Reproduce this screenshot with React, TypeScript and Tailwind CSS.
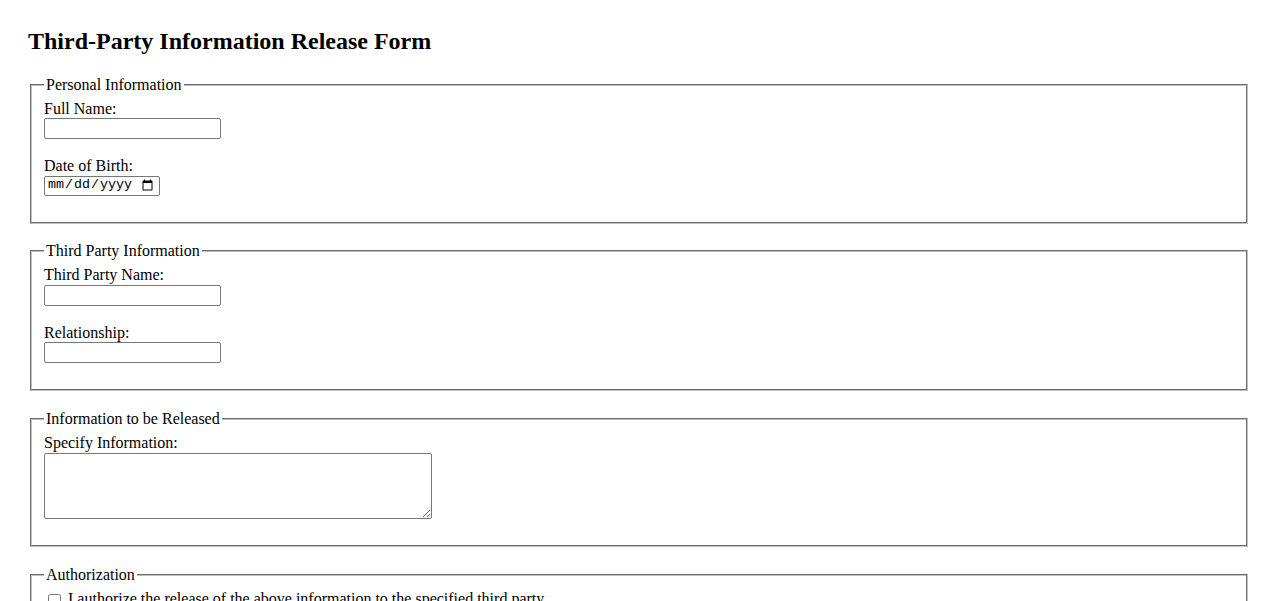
import React from "react";

const Field = ({ label, last, children }: { label: string; last?: boolean; children: React.ReactNode }) => (
  <div className={last ? "mb-[16px]" : "mb-[18.2px]"}>
    <label className="block">{label}</label>
    {children}
  </div>
);

const textInput =
  "block w-[177px] h-[21px] border border-[#767676] rounded-[2px] bg-white px-[2px] text-[13.33px] font-['Liberation_Sans',Arial,sans-serif]";

const Section = ({ title, children }: { title: string; children: React.ReactNode }) => (
  <fieldset className="mx-[2px] mb-[18.6px] px-3 pt-[5.6px] pb-[10px] [border:2px_groove_#c0c0c0]">
    <legend className="px-[2px]">{title}</legend>
    {children}
  </fieldset>
);

export default function App() {
  return (
    <div className="px-[28px] pt-[28px] bg-white text-black text-[16px] leading-[18.4px] font-['Liberation_Serif','Times_New_Roman',serif]">
      <h2 className="text-[24px] font-bold leading-[27.6px] mb-[19.92px]">Third-Party Information Release Form</h2>

      <form>
        <Section title="Personal Information">
          <Field label="Full Name:">
            <input type="text" className={textInput} />
          </Field>
          <Field label="Date of Birth:" last>
            <input
              type="date"
              className="block w-[116px] h-[20px] border border-[#767676] rounded-[2px] bg-white pl-[2px] pr-[3px] text-[13.33px] font-['Liberation_Mono','DejaVu_Sans_Mono',monospace]"
            />
          </Field>
        </Section>

        <Section title="Third Party Information">
          <Field label="Third Party Name:">
            <input type="text" className={textInput} />
          </Field>
          <Field label="Relationship:" last>
            <input type="text" className={textInput} />
          </Field>
        </Section>

        <Section title="Information to be Released">
          <div className="mb-[16px]">
            <label className="block">Specify Information:</label>
            <textarea className="block mt-px w-[388px] h-[66px] border border-[#767676] rounded-[2px] bg-white p-[2px] resize text-[13.33px] font-['Liberation_Mono',monospace]" />
          </div>
        </Section>

        <Section title="Authorization">
          <label className="flex items-start">
            <input type="checkbox" className="ml-1 mr-[3px] mt-[4px] w-[13px] h-[13px] shrink-0" />
            <span className="ml-1">I authorize the release of the above information to the specified third party.</span>
          </label>
        </Section>
      </form>
    </div>
  );
}
